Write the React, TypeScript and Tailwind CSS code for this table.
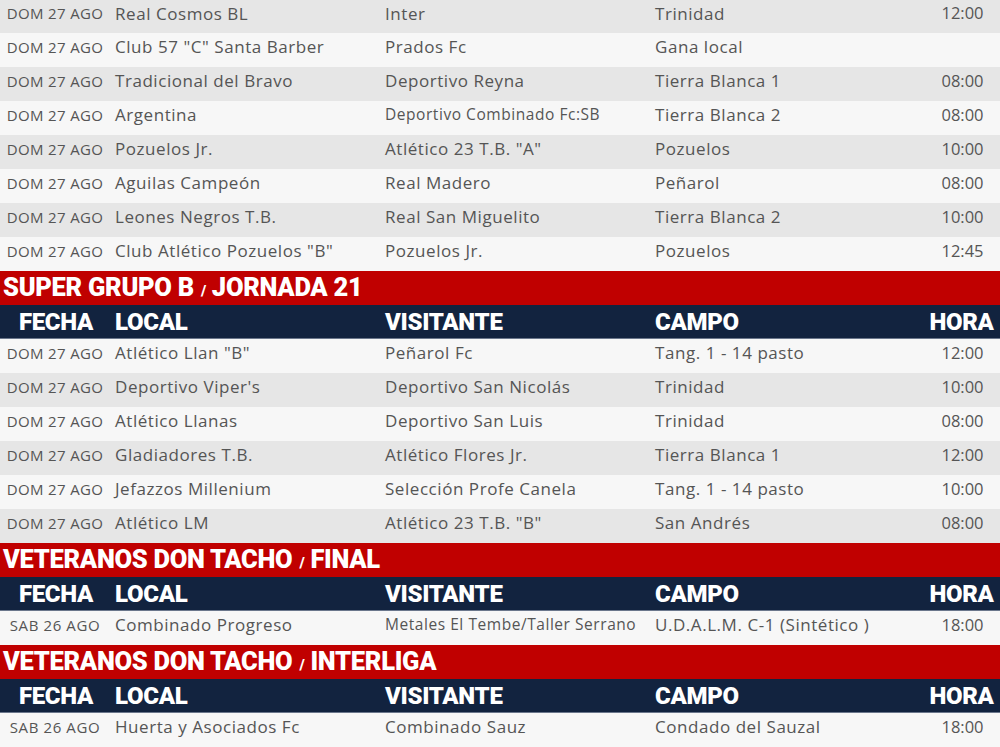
import React from "react";

type Row = [string, string, string, string, string];

const sec1: Row[] = [
  ["DOM 27 AGO", "Real Cosmos BL", "Inter", "Trinidad", "12:00"],
  ["DOM 27 AGO", 'Club 57 "C" Santa Barber', "Prados Fc", "Gana local", ""],
  ["DOM 27 AGO", "Tradicional del Bravo", "Deportivo Reyna", "Tierra Blanca 1", "08:00"],
  ["DOM 27 AGO", "Argentina", "Deportivo Combinado Fc:SB", "Tierra Blanca 2", "08:00"],
  ["DOM 27 AGO", "Pozuelos Jr.", 'Atlético 23 T.B. "A"', "Pozuelos", "10:00"],
  ["DOM 27 AGO", "Aguilas Campeón", "Real Madero", "Peñarol", "08:00"],
  ["DOM 27 AGO", "Leones Negros T.B.", "Real San Miguelito", "Tierra Blanca 2", "10:00"],
  ["DOM 27 AGO", 'Club Atlético Pozuelos "B"', "Pozuelos Jr.", "Pozuelos", "12:45"],
];

const sec2: Row[] = [
  ["DOM 27 AGO", 'Atlético Llan "B"', "Peñarol Fc", "Tang. 1 - 14 pasto", "12:00"],
  ["DOM 27 AGO", "Deportivo Viper's", "Deportivo San Nicolás", "Trinidad", "10:00"],
  ["DOM 27 AGO", "Atlético Llanas", "Deportivo San Luis", "Trinidad", "08:00"],
  ["DOM 27 AGO", "Gladiadores T.B.", "Atlético Flores Jr.", "Tierra Blanca 1", "12:00"],
  ["DOM 27 AGO", "Jefazzos Millenium", "Selección Profe Canela", "Tang. 1 - 14 pasto", "10:00"],
  ["DOM 27 AGO", "Atlético LM", 'Atlético 23 T.B. "B"', "San Andrés", "08:00"],
];

const sec3: Row[] = [
  ["SAB 26 AGO", "Combinado Progreso", "Metales El Tembe/Taller Serrano", "U.D.A.L.M. C-1 (Sintético )", "18:00"],
];

const sec4: Row[] = [
  ["SAB 26 AGO", "Huerta y Asociados Fc", "Combinado Sauz", "Condado del Sauzal", "18:00"],
];

const body = { fontFamily: '"Open Sans", "Noto Sans", sans-serif' };
const head = { fontFamily: 'Roboto, "Liberation Sans", sans-serif' };

function Title({ a, b }: { a: string; b: string }) {
  return (
    <div
      className="h-[34px] bg-[#c00000] text-white flex items-center pl-[3px] font-black text-[25.5px] tracking-[-0.3px] leading-none"
      style={head}
    >
      <span>{a}</span>
      <span className="text-[15px] ml-[7px] mr-[6px] mt-[6px]">/</span>
      <span>{b}</span>
    </div>
  );
}

function Header() {
  return (
    <div
      className="h-[34px] bg-[#12233f] text-white flex items-center font-black text-[24px] tracking-[-0.3px] leading-none border-b border-[#6b778c]"
      style={head}
    >
      <div className="w-[110px] text-center pl-[2px]">FECHA</div>
      <div className="w-[270px] pl-[5px]">LOCAL</div>
      <div className="w-[270px] pl-[5px]">VISITANTE</div>
      <div className="w-[275px] pl-[5px]">CAMPO</div>
      <div className="flex-1 text-center pr-[2px]">HORA</div>
    </div>
  );
}

function DataRow({ r, gray, first }: { r: Row; gray: boolean; first?: boolean }) {
  const small = r[2].length > 22;
  const sab = r[0].startsWith("SAB");
  return (
    <div
      className={`${first ? "h-[33px]" : "h-[34px]"} ${gray ? "bg-[#e6e6e6]" : "bg-[#f7f7f7]"} flex items-center text-[#555555] pb-[6px]`}
      style={body}
    >
      <div
        className={`w-[110px] text-center text-[15px] whitespace-nowrap ${sab ? "tracking-[0.6px]" : "tracking-[0.35px]"}`}
      >
        {r[0]}
      </div>
      <div className="w-[270px] pl-[5px] text-[17px] tracking-[0.55px] whitespace-nowrap">{r[1]}</div>
      <div
        className={`w-[270px] pl-[5px] whitespace-nowrap ${small ? "text-[15.5px] tracking-[0.55px]" : "text-[17px] tracking-[0.55px]"}`}
      >
        {r[2]}
      </div>
      <div className="w-[275px] pl-[5px] text-[17px] tracking-[0.55px] whitespace-nowrap">{r[3]}</div>
      <div className="flex-1 text-center text-[16.5px] whitespace-nowrap">{r[4]}</div>
    </div>
  );
}

export default function App() {
  return (
    <div className="w-[1000px] h-[747px] overflow-hidden bg-white flex flex-col">
      {sec1.map((r, i) => (
        <DataRow key={"a" + i} r={r} gray={i % 2 === 0} first={i === 0} />
      ))}
      <Title a="SUPER GRUPO B" b="JORNADA 21" />
      <Header />
      {sec2.map((r, i) => (
        <DataRow key={"b" + i} r={r} gray={i % 2 === 1} />
      ))}
      <Title a="VETERANOS DON TACHO" b="FINAL" />
      <Header />
      {sec3.map((r, i) => (
        <DataRow key={"c" + i} r={r} gray={false} />
      ))}
      <Title a="VETERANOS DON TACHO" b="INTERLIGA" />
      <Header />
      {sec4.map((r, i) => (
        <DataRow key={"d" + i} r={r} gray={false} />
      ))}
    </div>
  );
}
